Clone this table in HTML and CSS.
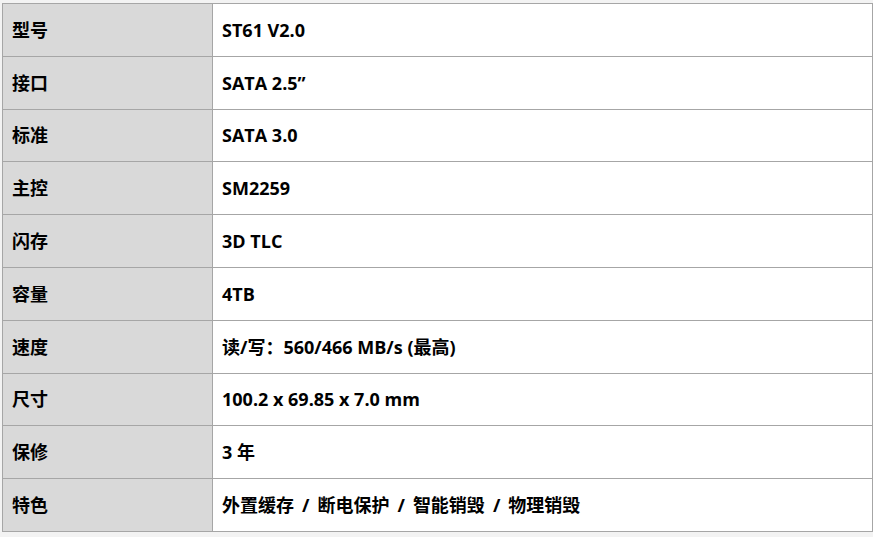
FILE: index.html
```html
<!DOCTYPE html>
<html lang="zh">
<head>
<meta charset="utf-8">
<link rel="stylesheet" href="styles.css">
</head>
<body>
<table class="spec">
  <tbody>
    <tr><td class="k">型号</td><td class="v">ST61 V2.0</td></tr>
    <tr><td class="k">接口</td><td class="v">SATA 2.5”</td></tr>
    <tr><td class="k">标准</td><td class="v">SATA 3.0</td></tr>
    <tr><td class="k">主控</td><td class="v">SM2259</td></tr>
    <tr><td class="k">闪存</td><td class="v">3D TLC</td></tr>
    <tr><td class="k">容量</td><td class="v">4TB</td></tr>
    <tr><td class="k">速度</td><td class="v">读/写：560/466 MB/s (最高)</td></tr>
    <tr><td class="k">尺寸</td><td class="v">100.2 x 69.85 x 7.0 mm</td></tr>
    <tr><td class="k">保修</td><td class="v">3 年</td></tr>
    <tr><td class="k">特色</td><td class="v">外置缓存<span class="sep">/</span>断电保护<span class="sep">/</span>智能销毁<span class="sep">/</span>物理销毁</td></tr>
  </tbody>
</table>
</body>
</html>
```
FILE: styles.css
```css
html, body {
  margin: 0;
  padding: 0;
  background: #f3f3f3;
}
body {
  padding: 3px 1px 0 2px;
  font-family: "Open Sans", "Noto Sans CJK SC", sans-serif;
  font-weight: 700;
  font-size: 18px;
  color: #000;
}
.spec {
  width: 871px;
  border-collapse: collapse;
  table-layout: fixed;
}
.spec td {
  border: 1px solid #a6a6a6;
  height: 52.8px;
  padding: 0 9px;
  box-sizing: border-box;
  vertical-align: middle;
  line-height: 22px;
}
.spec .k {
  width: 210px;
  background: #d9d9d9;
}
.spec .v {
  background: #fff;
}
.sep {
  margin: 0 8px;
}
```
